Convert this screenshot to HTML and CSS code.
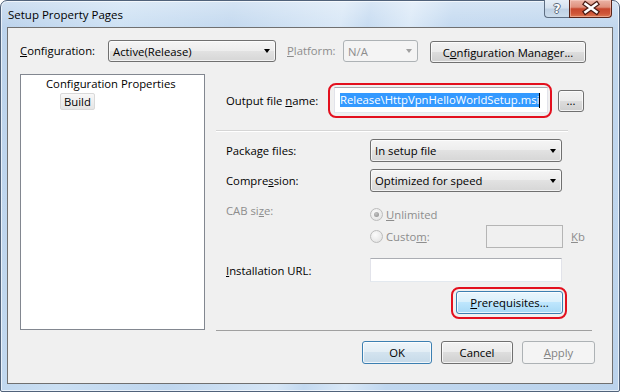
FILE: index.html
```html
<!DOCTYPE html>
<html lang="en">
<head>
<meta charset="utf-8">
<title>Setup Property Pages</title>
<link rel="stylesheet" href="styles.css">
</head>
<body>
<div class="window">
  <div class="titlebar">
    <span class="title">Setup Property Pages</span>
    <div class="caption-btns">
      <div class="cap-btn cap-help"><span>?</span></div>
      <div class="cap-btn cap-close">
        <svg width="42" height="16" viewBox="0 0 42 16">
          <path d="M15.5 4 L26.5 12 M26.5 4 L15.5 12" fill="none" stroke="#4a1c14" stroke-width="5" stroke-linecap="square"/>
          <path d="M15.5 4 L26.5 12 M26.5 4 L15.5 12" fill="none" stroke="#ffffff" stroke-width="2.6" stroke-linecap="square"/>
        </svg>
      </div>
    </div>
  </div>
  <div class="client">
    <div class="top-row">
      <span class="lbl lbl-config"><u>C</u>onfiguration:</span>
      <div class="combo combo-config"><span class="combo-text">Active(Release)</span><span class="arrow"></span></div>
      <span class="lbl lbl-platform dis"><u>P</u>latform:</span>
      <div class="combo combo-platform combo-dis"><span class="combo-text">N/A</span><span class="arrow"></span></div>
      <div class="btn btn-cfgmgr">C<u>o</u>nfiguration Manager...</div>
    </div>
    <div class="main">
      <div class="tree">
        <div class="tree-root">Configuration Properties</div>
        <div class="tree-child"><span class="tree-sel">Build</span></div>
      </div>
      <div class="page">
        <div class="output-row">
          <span class="lbl out-lbl">Output file <u>n</u>ame:</span>
          <div class="mark mark-output">
            <div class="textbox out-box"><span class="selection">Release\HttpVpnHelloWorldSetup.msi</span><span class="caret"></span></div>
          </div>
          <div class="btn btn-browse">...</div>
        </div>
        <div class="sep sep-top"></div>
        <div class="props">
          <div class="prop-row r-pkg">
            <span class="lbl">Packa<u>g</u>e files:</span>
            <div class="combo"><span class="combo-text">In setup file</span><span class="arrow"></span></div>
          </div>
          <div class="prop-row r-comp">
            <span class="lbl">Compre<u>s</u>sion:</span>
            <div class="combo"><span class="combo-text">Optimized for speed</span><span class="arrow"></span></div>
          </div>
          <div class="prop-row r-cab">
            <span class="lbl dis cab-lbl">CAB si<u>z</u>e:</span>
            <div class="radio-line"><span class="radio checked"></span><span class="dis"><u>U</u>nlimited</span></div>
          </div>
          <div class="prop-row r-custom">
            <span></span>
            <div class="custom-line">
              <div class="radio-line custom-radio"><span class="radio"></span><span class="dis">Custo<u>m</u>:</span></div>
              <div class="textbox box-dis"></div>
              <span class="dis kb"><u>K</u>b</span>
            </div>
          </div>
          <div class="prop-row r-url">
            <span class="lbl"><u>I</u>nstallation URL:</span>
            <div class="textbox url-box"></div>
          </div>
          <div class="prop-row r-prereq">
            <span></span>
            <div class="mark mark-prereq"><div class="btn btn-hot"><u>P</u>rerequisites...</div></div>
          </div>
        </div>
        <div class="sep sep-bottom"></div>
      </div>
    </div>
    <div class="dlg-buttons">
      <div class="btn btn-ok">OK</div>
      <div class="btn btn-cancel">Cancel</div>
      <div class="btn btn-apply btn-dis"><u>A</u>pply</div>
    </div>
  </div>
</div>
</body>
</html>
```

FILE: styles.css
```css
* { box-sizing: border-box; }
html, body { margin: 0; padding: 0; }
body {
  width: 620px; height: 392px; overflow: hidden; background: #fff;
  font-family: "Open Sans", "Noto Sans", "DejaVu Sans", sans-serif;
  font-size: 11.3px; line-height: 15px; color: #000;
}
u { text-decoration: underline; text-decoration-thickness: 1px; text-underline-offset: 1px; }

.window {
  width: 620px; height: 392px;
  display: flex; flex-direction: column;
  padding: 0 6px 7px 6px;
  border: 1px solid #50627a;
  border-radius: 7px 7px 2px 2px;
  background:
    linear-gradient(to bottom, rgba(255,255,255,.35) 0, rgba(255,255,255,.08) 26px, rgba(255,255,255,0) 100%),
    linear-gradient(100deg, #b6cfea 0%, #cadff3 18%, #bfd6ee 34%, #d6e6f6 50%, #c3d9f0 54%, #d9e8f7 60%, #c0d7ef 66%, #bbd3ec 100%);
  box-shadow: inset 0 0 0 1px rgba(255,255,255,.65);
}

/* title bar */
.titlebar {
  flex: none; height: 26px; margin: 0 -6px;
  padding: 0 7px 0 7px;
  display: flex; justify-content: space-between; align-items: flex-start;
}
.title { margin-top: 6px; font-size: 11.5px; line-height: 16px; }
.caption-btns { display: flex; margin-top: -1px; }
.cap-btn { height: 18px; border: 1px solid #5e6e82; border-top: none; }
.cap-help {
  width: 25px; border-right: none; border-radius: 0 0 0 4px;
  background: linear-gradient(#e6eef7 0%, #d6e2ef 45%, #bfd1e4 55%, #ccdcec 100%);
  display: flex; align-items: center; justify-content: center;
}
.cap-help span {
  font: bold 12px/12px "DejaVu Sans", sans-serif; color: #fff;
  text-shadow: 1px 0 0 #5a6a7c, -1px 0 0 #5a6a7c, 0 1px 0 #5a6a7c, 0 -1px 0 #5a6a7c;
}
.cap-close {
  width: 43px; border-color: #5a2418; border-radius: 0 0 4px 0;
  background: linear-gradient(#ebb4a6 0%, #df907c 42%, #c7472d 52%, #cf5638 80%, #dd7a52 100%);
  box-shadow: inset 0 0 0 1px rgba(255,220,210,.45);
}
.cap-close svg { display: block; }

/* client */
.client {
  flex: 1; display: flex; flex-direction: column;
  background: #f0f0f0; border: 1px solid #707070;
  padding: 12px 0 0 12px;
}

.lbl { white-space: nowrap; }
.dis { color: #8d8d8d; }

.top-row { display: flex; align-items: flex-start; height: 23px; }
.lbl-config { width: 88px; line-height: 22px; }
.combo-config { width: 168px; }
.lbl-platform { width: 56px; margin-left: 11px; line-height: 22px; }
.combo-platform { width: 75px; }
.btn-cfgmgr { width: 156px; margin-left: 12px; margin-top: 1px; }

/* combo */
.combo {
  display: flex; align-items: center; justify-content: space-between;
  height: 22px; padding: 0 5px 0 4px;
  border: 1px solid #707070; border-radius: 3px;
  background: linear-gradient(#f5f5f5 0%, #ededed 49%, #e2e2e2 50%, #d6d6d6 100%);
  box-shadow: inset 0 0 0 1px rgba(255,255,255,.7);
  white-space: nowrap;
}
.arrow {
  width: 0; height: 0;
  border-left: 3.5px solid transparent; border-right: 3.5px solid transparent;
  border-top: 4px solid #000;
}
.combo-dis { border-color: #adb2b5; background: #f4f4f4; box-shadow: none; color: #8d8d8d; }
.combo-dis .arrow { border-top-color: #a0a0a0; }

/* buttons */
.btn {
  display: flex; align-items: center; justify-content: center;
  height: 22px; border: 1px solid #707070; border-radius: 3px;
  background: linear-gradient(#f2f2f2 0%, #ebebeb 49%, #dddddd 50%, #cfcfcf 100%);
  box-shadow: inset 0 0 0 1px rgba(255,255,255,.75);
  white-space: nowrap;
}
.btn-hot {
  border-color: #3c7fb1;
  background: linear-gradient(#eaf6fd 0%, #d9f0fc 49%, #bee6fd 50%, #a7d9f5 100%);
}
.btn-ok {
  border-color: #3c7fb1;
  background: linear-gradient(#eef5fa 0%, #e2edf5 49%, #d3e3ef 50%, #c6dae9 100%);
}
.btn-dis { border-color: #adb2b5; background: #f4f4f4; box-shadow: none; color: #838383; }

/* main */
.main { display: flex; align-items: flex-start; margin-top: 11px; }
.tree {
  width: 185px; height: 256px; flex: none;
  background: #fff; border: 1px solid #828790;
  padding: 1px 0 0 0;
}
.tree-root { padding-left: 25px; line-height: 15px; }
.tree-child { padding-left: 39px; margin-top: 2px; }
.tree-sel {
  display: inline-block; height: 17px; line-height: 15px; padding: 0 3px;
  border: 1px solid #d9d9d9; border-radius: 2px;
  background: linear-gradient(#f8f8f8, #e5e5e5);
}

.page { width: 376px; margin-left: 11px; flex: none; }
.output-row {
  display: flex; align-items: center;
  height: 56px; padding: 0 0 3px 10px;
}
.out-lbl { width: 102px; }
.mark { border: 2px solid #e3101e; border-radius: 8px; }
.mark-output { width: 224px; height: 35px; padding: 2px 2px 3px 4px; display: flex; }
.textbox {
  background: #fff;
  border: 1px solid #e2e3ea; border-top-color: #abadb3; border-bottom-color: #e3e9ef;
}
.out-box {
  flex: 1; display: flex; align-items: center; overflow: hidden;
  padding: 0 0 0 5px; white-space: nowrap;
}
.selection { background: #3399ff; color: #fff; line-height: 14px; height: 14px; }
.caret { width: 1px; height: 15px; background: #000; flex: none; }
.btn-browse { width: 26px; margin-left: 6px; line-height: 10px; align-items: flex-end; padding-bottom: 5px; }

.sep { height: 2px; }
.sep-top { width: 352px; border-top: 1px solid #d5d5d5; border-bottom: 1px solid #fff; }
.sep-bottom { width: 376px; height: 1px; margin-top: 11px; background: #a0a0a0; }

.props { padding-left: 10px; }
.prop-row { display: grid; grid-template-columns: 144px 192px; align-items: center; }
.r-pkg { height: 23px; margin-top: 7px; }
.r-comp { height: 23px; margin-top: 7px; }
.r-cab { height: 20px; margin-top: 12px; }
.r-custom { height: 23px; margin-top: 1px; }
.r-url { height: 24px; margin-top: 10px; }
.r-prereq { height: 32px; margin-top: 5px; }
.r-pkg .combo, .r-comp .combo { height: 23px; }
.cab-lbl { align-self: start; margin-top: -1px; }

.radio-line { display: flex; align-items: center; white-space: nowrap; }
.radio {
  width: 13px; height: 13px; border-radius: 50%; margin-right: 3px; flex: none;
  border: 1px solid #bcbcbc;
  background: radial-gradient(circle at 40% 35%, #fbfbfb 0%, #eaeaea 60%, #dcdcdc 100%);
  display: flex; align-items: center; justify-content: center;
}
.radio.checked::after {
  content: ""; width: 5px; height: 5px; border-radius: 50%;
  background: radial-gradient(circle at 40% 35%, #c4c4c4, #8a8a8a);
}
.custom-line { display: flex; align-items: center; height: 23px; width: 230px; }
.custom-line > * { flex: none; }
.custom-radio { width: 116px; }
.box-dis { width: 77px; height: 23px; background: #f0f0f0; border: 1px solid #b5b5b5; }
.kb { margin-left: 8px; }
.url-box { height: 24px; }

.mark-prereq { width: 116px; height: 32px; margin-left: 81px; padding: 2px 2px 3px 3px; }
.mark-prereq .btn { height: 23px; }

.dlg-buttons {
  display: flex; justify-content: flex-end; gap: 9px;
  margin-top: 10px; padding-right: 17px;
}
.dlg-buttons .btn { height: 23px; }
.btn-ok { width: 70px; }
.btn-cancel { width: 72px; }
.btn-apply { width: 73px; }
```
